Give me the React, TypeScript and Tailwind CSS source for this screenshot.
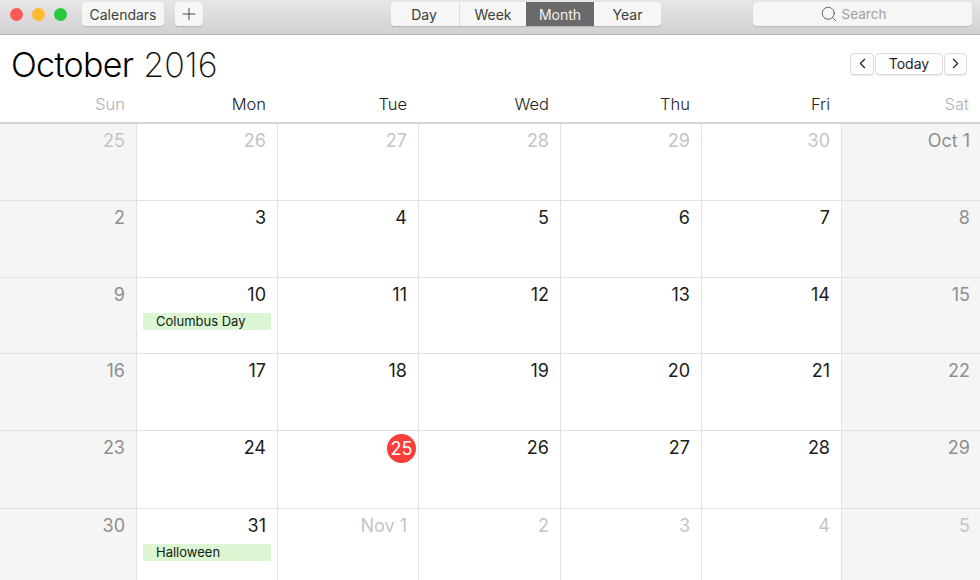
import React from 'react';
import { ChevronLeft, ChevronRight, Plus, Search } from 'lucide-react';

const weekdays = [
    { label: 'Sun', muted: true },
    { label: 'Mon' },
    { label: 'Tue' },
    { label: 'Wed' },
    { label: 'Thu' },
    { label: 'Fri' },
    { label: 'Sat', muted: true }
];

type Day = { label: string; outside?: boolean; today?: boolean; event?: string };

const days: Day[] = [
    { label: '25', outside: true }, { label: '26', outside: true }, { label: '27', outside: true }, { label: '28', outside: true }, { label: '29', outside: true }, { label: '30', outside: true }, { label: 'Oct 1' },
    { label: '2' }, { label: '3' }, { label: '4' }, { label: '5' }, { label: '6' }, { label: '7' }, { label: '8' },
    { label: '9' }, { label: '10', event: 'Columbus Day' }, { label: '11' }, { label: '12' }, { label: '13' }, { label: '14' }, { label: '15' },
    { label: '16' }, { label: '17' }, { label: '18' }, { label: '19' }, { label: '20' }, { label: '21' }, { label: '22' },
    { label: '23' }, { label: '24' }, { label: '25', today: true }, { label: '26' }, { label: '27' }, { label: '28' }, { label: '29' },
    { label: '30' }, { label: '31', event: 'Halloween' }, { label: 'Nov 1', outside: true }, { label: '2', outside: true }, { label: '3', outside: true }, { label: '4', outside: true }, { label: '5', outside: true }
];

const DayCell: React.FC<{ day: Day; index: number }> = ({ day, index }) => {
    const col = index % 7;
    const weekend = col === 0 || col === 6;
    let color = 'text-[#1c1c1c]';
    if (weekend) color = 'text-[#8f8f8f]';
    if (day.outside) color = 'text-[#c4c4c4]';

    return (
        <div className={`flex flex-col min-w-0 ${col === 6 ? '' : 'border-r border-[#e2e2e2]'} ${index < 35 ? 'border-b border-[#e2e2e2]' : ''} ${weekend ? 'bg-[#f5f5f5]' : 'bg-white'}`}>
            <div className={`flex justify-end h-[31px] items-center mt-[1px] ${col === 6 ? 'pr-[10px]' : 'pr-[11px]'} text-[18px] ${color}`}>
                {day.today ? (
                    <span className="flex items-center justify-center w-[29px] h-[29px] -mr-[9px] mt-[1px] rounded-full bg-[#fc3d39] text-white">{day.label}</span>
                ) : (
                    day.label
                )}
            </div>
            {day.event && (
                <div className="mt-[3px] mx-[6px] h-[17px] pl-[13px] bg-[#dcf5d3] text-[13px] leading-[17px] text-[#10240f]">{day.event}</div>
            )}
        </div>
    );
};

const tabs = ['Day', 'Week', 'Month', 'Year'];
const tabWidths = ['w-[69px] pr-[2px]', 'w-[66px]', 'w-[68px]', 'w-[67px]'];

export default function App() {
    return (
        <div className="w-[980px] h-[580px] overflow-hidden flex flex-col bg-white font-['Inter','Liberation_Sans',sans-serif]">
            {/* Toolbar */}
            <div className="h-[35px] shrink-0 flex items-start pt-[2px] border-b border-[#b9b7b9] bg-gradient-to-b from-[#e8e6e8] to-[#d2d0d2]">
                <div className="flex items-center gap-[9px] ml-[10px] mt-[6px]">
                    <span className="w-[13px] h-[13px] rounded-full bg-[#fc5b57]" />
                    <span className="w-[13px] h-[13px] rounded-full bg-[#fdbc2e]" />
                    <span className="w-[13px] h-[13px] rounded-full bg-[#28c83f]" />
                </div>
                <div className="ml-[15px] h-[24px] w-[82px] flex items-center justify-center rounded-[4px] bg-[#f6f6f6] shadow-[0_1px_1px_rgba(0,0,0,0.15)] text-[14px] text-[#3d3d3d]">Calendars</div>
                <div className="ml-[11px] h-[24px] w-[28px] flex items-center justify-center rounded-[4px] bg-[#f6f6f6] shadow-[0_1px_1px_rgba(0,0,0,0.15)] text-[#4a4a4a]">
                    <Plus size={20} strokeWidth={1.2} />
                </div>
                <div className="ml-[188px] h-[24px] w-[270px] flex rounded-[4px] overflow-hidden bg-[#f6f6f6] shadow-[0_1px_1px_rgba(0,0,0,0.15)] text-[14px] text-[#3d3d3d]">
                    {tabs.map((tab, i) => (
                        <div
                            key={tab}
                            className={`flex items-center justify-center ${tabWidths[i]} ${tab === 'Month' ? 'bg-[#6a6a6a] text-[#f2f2f2]' : ''} ${tab === 'Day' ? 'border-r border-[#dedede]' : ''}`}
                        >
                            {tab}
                        </div>
                    ))}
                </div>
                <div className="ml-[92px] h-[24px] w-[219px] flex items-center justify-center gap-[4px] pr-[19px] rounded-[4px] bg-[#f6f6f6] shadow-[0_1px_1px_rgba(0,0,0,0.15)] text-[13.5px] text-[#a0a0a0]">
                    <Search size={18} strokeWidth={1.2} className="text-[#555555]" />
                    <span>Search</span>
                </div>
            </div>

            {/* Month title and navigation */}
            <div className="h-[58px] shrink-0 flex items-center justify-between pl-[11px] pr-[13px]">
                <div className="text-[34px] leading-none text-black font-light tracking-[-0.7px] mt-[2px] flex gap-[10px]">
                    <span>October</span>
                    <span className="font-[250] tracking-normal text-[#111111]">2016</span>
                </div>
                <div className="flex items-center gap-[1px] -mt-[1px] text-[#1f1f1f]">
                    <div className="w-[24px] h-[22px] flex items-center justify-center rounded-[4px] bg-white border border-[#dcdcdc] shadow-[0_1px_0_rgba(0,0,0,0.08)]">
                        <ChevronLeft size={17} strokeWidth={1.6} />
                    </div>
                    <div className="w-[68px] h-[22px] flex items-center justify-center rounded-[4px] bg-white border border-[#dcdcdc] shadow-[0_1px_0_rgba(0,0,0,0.08)] text-[14px]">Today</div>
                    <div className="w-[23px] h-[22px] flex items-center justify-center rounded-[4px] bg-white border border-[#dcdcdc] shadow-[0_1px_0_rgba(0,0,0,0.08)]">
                        <ChevronRight size={17} strokeWidth={1.6} />
                    </div>
                </div>
            </div>

            {/* Weekday header */}
            <div className="h-[31px] shrink-0 grid grid-cols-[137px_141px_141px_142px_141px_140px_138px] border-b-2 border-[#d4d4d4]">
                {weekdays.map((d, i) => (
                    <div key={d.label} className={`flex items-center justify-end h-[22px] text-[16.5px] font-light ${i === 6 ? 'pr-[11px]' : 'pr-[12px]'} ${d.muted ? 'text-[#b0b0b0]' : 'text-[#222222]'}`}>
                        {d.label}
                    </div>
                ))}
            </div>

            {/* Month grid */}
            <div className="flex-1 grid grid-cols-[137px_141px_141px_142px_141px_140px_138px] grid-rows-[77px_77px_76px_77px_78px_71px]">
                {days.map((day, i) => (
                    <DayCell key={i} day={day} index={i} />
                ))}
            </div>
        </div>
    );
}
